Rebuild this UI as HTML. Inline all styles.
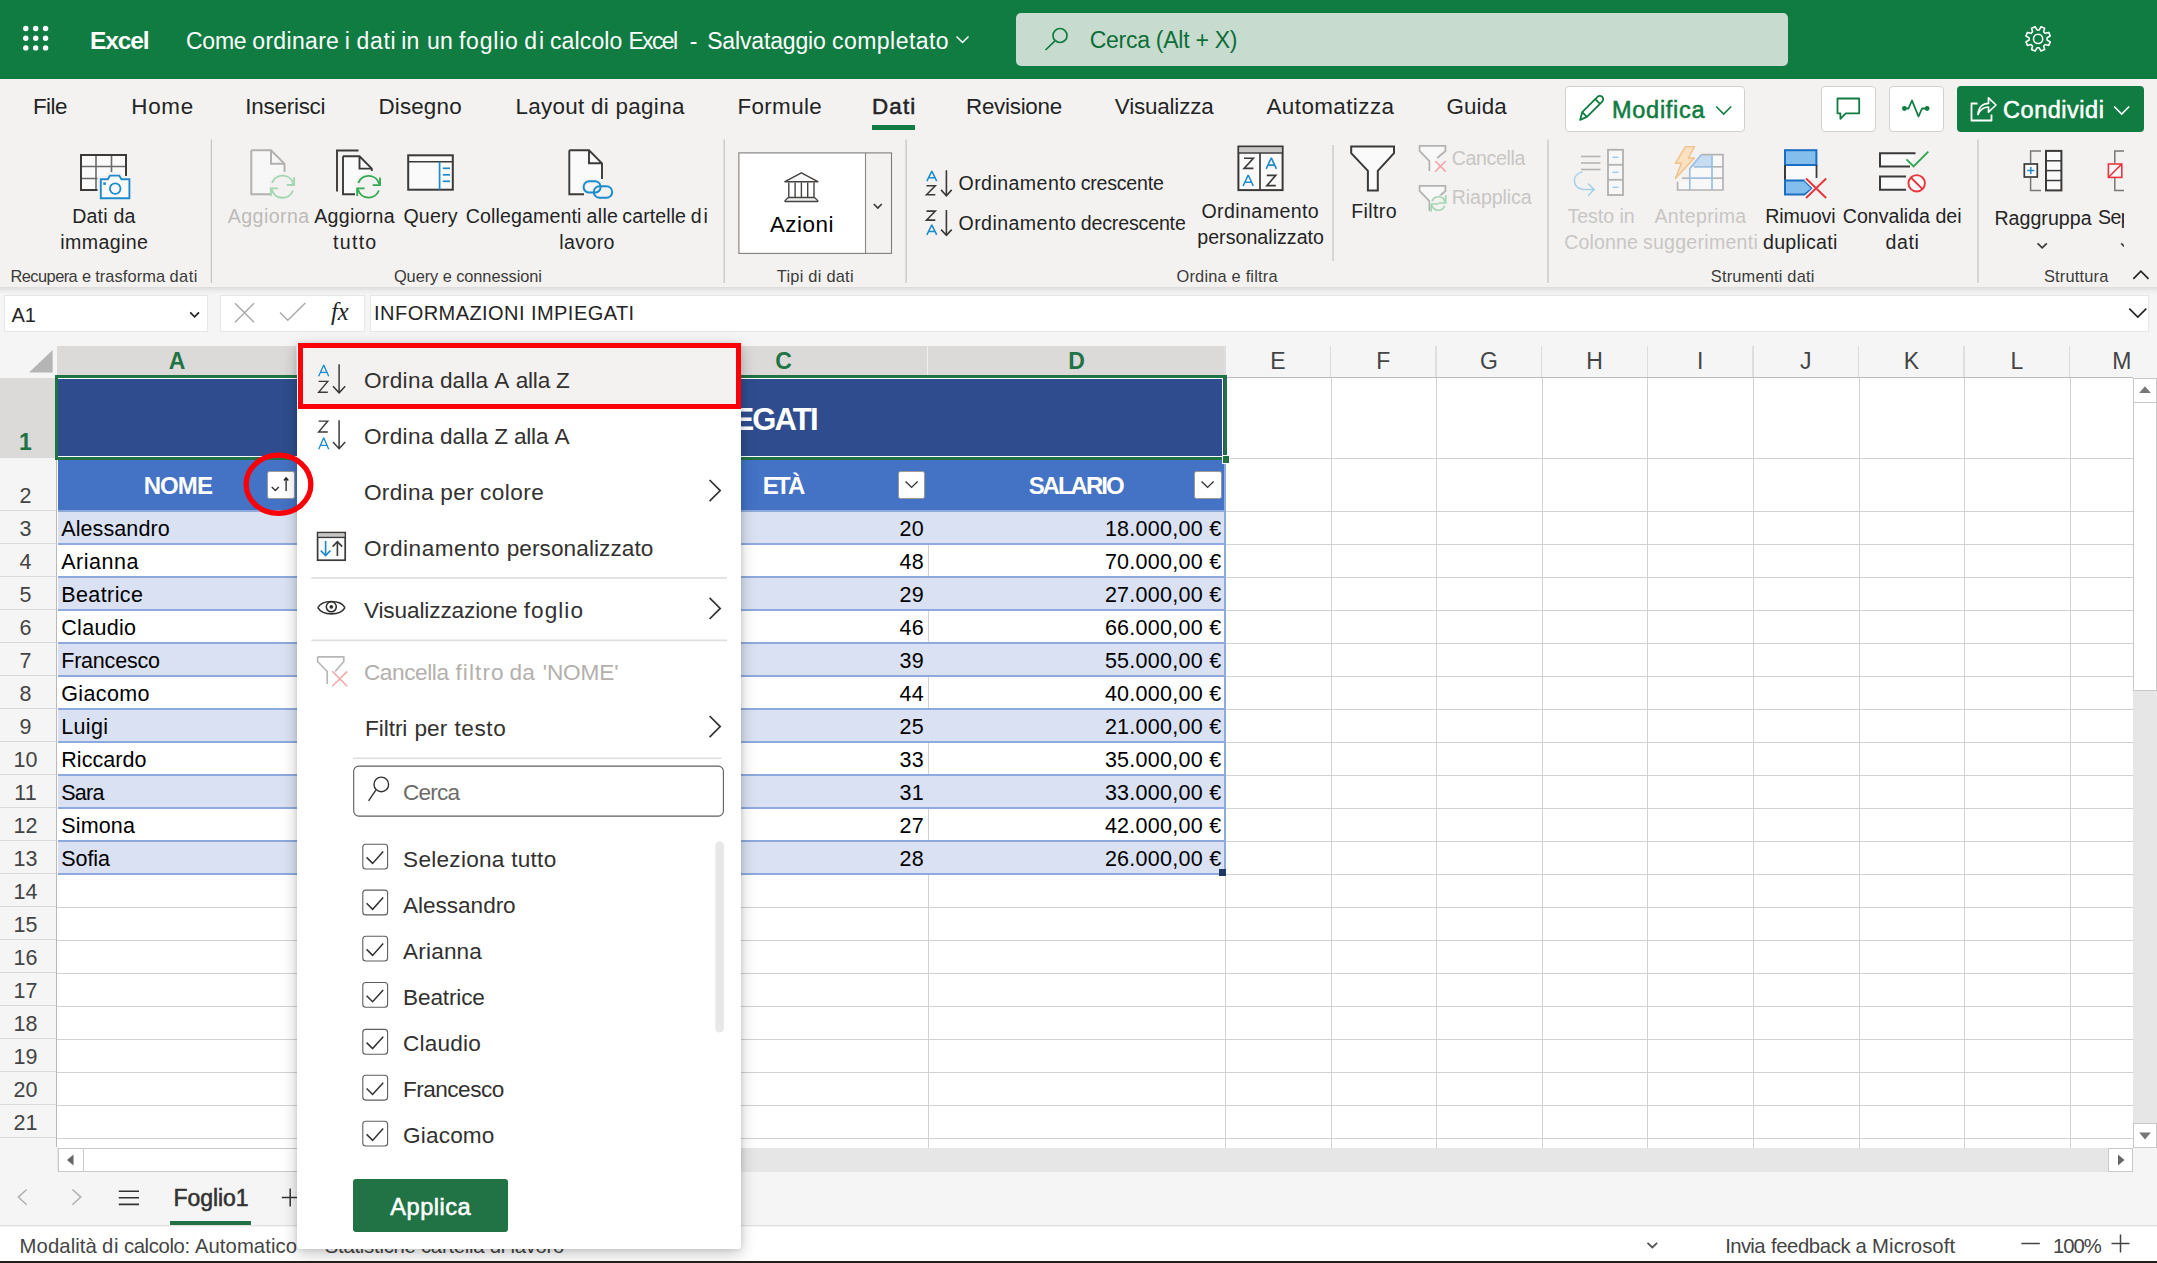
<!DOCTYPE html>
<html><head><meta charset="utf-8"><title>Excel</title>
<style>
html,body{margin:0;padding:0;}html{width:2157px;height:1263px;overflow:hidden;}
body{width:2157px;height:1263px;overflow:hidden;position:relative;background:#f5f5f5;font-family:"Liberation Sans",sans-serif;}
.t{position:absolute;white-space:nowrap;line-height:1;font-family:"Liberation Sans",sans-serif;}
.b{position:absolute;box-sizing:border-box;}
svg{position:absolute;overflow:visible;}
</style></head><body>

<div class="b" style="left:0;top:0;width:2157px;height:79px;background:#107c41"></div>
<svg style="left:0;top:0" width="60" height="79"><circle cx="25.8" cy="28.5" r="2.7" fill="#fff"/><circle cx="35.7" cy="28.5" r="2.7" fill="#fff"/><circle cx="45.6" cy="28.5" r="2.7" fill="#fff"/><circle cx="25.8" cy="38.2" r="2.7" fill="#fff"/><circle cx="35.7" cy="38.2" r="2.7" fill="#fff"/><circle cx="45.6" cy="38.2" r="2.7" fill="#fff"/><circle cx="25.8" cy="47.9" r="2.7" fill="#fff"/><circle cx="35.7" cy="47.9" r="2.7" fill="#fff"/><circle cx="45.6" cy="47.9" r="2.7" fill="#fff"/></svg>
<span class="t" style="top:29.00px;font-size:24.5px;color:#fff;font-weight:700;letter-spacing:-1.118px;left:89.92px;">Excel</span>
<span class="t" style="top:30.00px;font-size:23px;color:#fff;letter-spacing:-0.240px;left:185.98px;">Come</span>
<span class="t" style="top:30.00px;font-size:23px;color:#fff;letter-spacing:0.321px;left:252.28px;">ordinare</span>
<span class="t" style="top:30.00px;font-size:23px;color:#fff;left:344.68px;">i</span>
<span class="t" style="top:30.00px;font-size:23px;color:#fff;letter-spacing:0.649px;left:356.58px;">dati</span>
<span class="t" style="top:30.00px;font-size:23px;color:#fff;letter-spacing:0.234px;left:401.28px;">in</span>
<span class="t" style="top:30.00px;font-size:23px;color:#fff;letter-spacing:0.346px;left:426.88px;">un</span>
<span class="t" style="top:30.00px;font-size:23px;color:#fff;letter-spacing:0.811px;left:458.88px;">foglio</span>
<span class="t" style="top:30.00px;font-size:23px;color:#fff;letter-spacing:2.134px;left:524.18px;">di</span>
<span class="t" style="top:30.00px;font-size:23px;color:#fff;letter-spacing:0.155px;left:549.88px;">calcolo</span>
<span class="t" style="top:30.00px;font-size:23px;color:#fff;letter-spacing:-1.627px;left:628.38px;">Excel</span>
<span class="t" style="top:30.00px;font-size:23px;color:#fff;left:689.70px;">-</span>
<span class="t" style="top:30.00px;font-size:23px;color:#fff;letter-spacing:-0.156px;left:707.18px;">Salvataggio</span>
<span class="t" style="top:30.00px;font-size:23px;color:#fff;letter-spacing:0.447px;left:832.08px;">completato</span>
<svg style="left:955px;top:35px" width="16" height="10"><path d="M1.5 1.5 L7.5 7.5 L13.5 1.5" fill="none" stroke="#fff" stroke-width="1.5"/></svg>
<div class="b" style="left:1016px;top:13px;width:772px;height:53px;background:#c7dbce;border-radius:5px"></div>
<svg style="left:1044px;top:26px" width="26" height="26"><circle cx="16" cy="9.5" r="7" fill="none" stroke="#107c41" stroke-width="1.7"/><path d="M11 14.8 L1.5 24" stroke="#107c41" stroke-width="1.7" fill="none"/></svg>
<span class="t" style="top:29.00px;font-size:23px;color:#0e6e39;letter-spacing:-0.259px;left:1089.68px;">Cerca (Alt + X)</span>
<svg style="left:0;top:0" width="2157" height="79"><g transform="translate(2038.1,38.9)" fill="none" stroke="#fff" stroke-width="1.55"><path d="M-2.40 -8.67 L-1.93 -12.35 L1.93 -12.35 L2.40 -8.67 L4.44 -7.83 L7.37 -10.10 L10.10 -7.37 L7.83 -4.44 L8.67 -2.40 L12.35 -1.93 L12.35 1.93 L8.67 2.40 L7.83 4.44 L10.10 7.37 L7.37 10.10 L4.44 7.83 L2.40 8.67 L1.93 12.35 L-1.93 12.35 L-2.40 8.67 L-4.44 7.83 L-7.37 10.10 L-10.10 7.37 L-7.83 4.44 L-8.67 2.40 L-12.35 1.93 L-12.35 -1.93 L-8.67 -2.40 L-7.83 -4.44 L-10.10 -7.37 L-7.37 -10.10 L-4.44 -7.83 Z" stroke-linejoin="round" transform="rotate(22.5)"/><circle r="4.6"/></g></svg>
<div class="b" style="left:0;top:79px;width:2157px;height:208px;background:#f3f2f1"></div>
<div class="b" style="left:0;top:287px;width:2157px;height:8px;background:linear-gradient(#dddcdb,#efefef 60%,#f5f5f5)"></div>
<span class="t" style="top:96.00px;font-size:22.4px;color:#242424;letter-spacing:-0.501px;left:32.90px;">File</span>
<span class="t" style="top:96.00px;font-size:22.4px;color:#242424;letter-spacing:0.719px;left:131.30px;">Home</span>
<span class="t" style="top:96.00px;font-size:22.4px;color:#242424;letter-spacing:-0.217px;left:245.20px;">Inserisci</span>
<span class="t" style="top:96.00px;font-size:22.4px;color:#242424;letter-spacing:0.173px;left:378.40px;">Disegno</span>
<span class="t" style="top:96.00px;font-size:22.4px;color:#242424;letter-spacing:0.310px;left:515.40px;">Layout di pagina</span>
<span class="t" style="top:96.00px;font-size:22.4px;color:#242424;letter-spacing:0.378px;left:737.40px;">Formule</span>
<span class="t" style="top:96.00px;font-size:22.4px;color:#242424;letter-spacing:-0.267px;left:966.00px;">Revisione</span>
<span class="t" style="top:96.00px;font-size:22.4px;color:#242424;letter-spacing:-0.168px;left:1114.80px;">Visualizza</span>
<span class="t" style="top:96.00px;font-size:22.4px;color:#242424;letter-spacing:0.427px;left:1266.50px;">Automatizza</span>
<span class="t" style="top:96.00px;font-size:22.4px;color:#242424;letter-spacing:0.110px;left:1446.50px;">Guida</span>
<span class="t" style="top:96.00px;font-size:22.4px;color:#242424;-webkit-text-stroke:0.55px currentColor;letter-spacing:1.088px;left:872.10px;">Dati</span>
<div class="b" style="left:872px;top:125px;width:43px;height:5px;background:#107c41"></div>
<div class="b" style="left:1565px;top:86px;width:180px;height:46px;background:#fff;border:1px solid #d1d1d1;border-radius:4px"></div>
<svg style="left:1577px;top:95px" width="30" height="30"><path d="M3.2 24.8 L5.2 17.2 L20.5 1.9 C21.8 0.6 23.9 0.6 25.2 1.9 C26.5 3.2 26.5 5.3 25.2 6.6 L9.9 21.9 Z M5.2 17.2 L9.9 21.9 M18.3 4.1 L23 8.8" fill="none" stroke="#107c41" stroke-width="1.8" stroke-linejoin="round"/></svg>
<span class="t" style="top:99.00px;font-size:23.5px;color:#107c41;-webkit-text-stroke:0.55px currentColor;letter-spacing:0.709px;left:1612.06px;">Modifica</span>
<svg style="left:1715px;top:105px" width="18" height="11"><path d="M1.2 1.5 L8.7 9 L16.2 1.5" fill="none" stroke="#107c41" stroke-width="1.6"/></svg>
<div class="b" style="left:1821px;top:86px;width:55px;height:46px;background:#fff;border:1px solid #d1d1d1;border-radius:4px"></div>
<svg style="left:1836px;top:97px" width="26" height="24"><path d="M1.5 1.5 H23.2 V16.3 H9.8 L4.4 21.8 V16.3 H1.5 Z" fill="none" stroke="#107c41" stroke-width="1.8" stroke-linejoin="round"/></svg>
<div class="b" style="left:1889px;top:86px;width:55px;height:46px;background:#fff;border:1px solid #d1d1d1;border-radius:4px"></div>
<svg style="left:1901px;top:97.8px" width="30" height="22"><path d="M3.5 10.5 H7.5 L11 2.5 L17.5 18.5 L21 10.5 H25.5" fill="none" stroke="#107c41" stroke-width="1.8" stroke-linejoin="round"/><circle cx="3.4" cy="10.5" r="2.4" fill="#107c41"/><circle cx="26.1" cy="10.5" r="2.4" fill="#107c41"/></svg>
<div class="b" style="left:1957px;top:86px;width:187px;height:46px;background:#107c41;border-radius:4px"></div>
<svg style="left:1969px;top:95px" width="30" height="30"><path d="M8.5 8.5 H2.5 V25.5 H22.5 V19.5" fill="none" stroke="#fff" stroke-width="1.8" stroke-linejoin="round"/><path d="M9 19.5 C9.5 12 14 8.3 19.5 8.3 V2.8 L27 10 L19.5 17.2 V12 C15 12 11.5 14 9 19.5 Z" fill="none" stroke="#fff" stroke-width="1.7" stroke-linejoin="round"/></svg>
<span class="t" style="top:99.00px;font-size:23.5px;color:#fff;-webkit-text-stroke:0.55px currentColor;letter-spacing:0.526px;left:2003.06px;">Condividi</span>
<svg style="left:2113px;top:105px" width="18" height="11"><path d="M1.2 1.5 L8.7 9 L16.2 1.5" fill="none" stroke="#fff" stroke-width="1.6"/></svg>
<svg style="left:0;top:0" width="2157" height="300"><path d="M211.4 139.5 L211.4 283" stroke="#c8c6c4" stroke-width="1.3" fill="none"/><path d="M724.2 139.5 L724.2 283" stroke="#c8c6c4" stroke-width="1.3" fill="none"/><path d="M906.1 139.5 L906.1 283" stroke="#c8c6c4" stroke-width="1.3" fill="none"/><path d="M1548 139.5 L1548 283" stroke="#c8c6c4" stroke-width="1.3" fill="none"/><path d="M1978 139.5 L1978 283" stroke="#c8c6c4" stroke-width="1.3" fill="none"/><path d="M1333 145 L1333 261" stroke="#c8c6c4" stroke-width="1.3" fill="none"/><rect x="81" y="155" width="45" height="35" stroke="#3b3a39" stroke-width="2" fill="#fafafa"/><path d="M96 155 L96 190" stroke="#6b6a68" stroke-width="1.6" fill="none"/><path d="M111.5 155 L111.5 190" stroke="#6b6a68" stroke-width="1.6" fill="none"/><path d="M81 166.5 L126 166.5" stroke="#6b6a68" stroke-width="1.6" fill="none"/><path d="M81 178.5 L126 178.5" stroke="#6b6a68" stroke-width="1.6" fill="none"/><rect x="81" y="155" width="45" height="35" stroke="#3b3a39" stroke-width="2" fill="none"/><path d="M99 200 V177.5 H106.5 L109 173.5 H120 L122.5 177.5 H131.5 V200 Z" stroke="#f3f2f1" stroke-width="3" fill="#f3f2f1" /><path d="M100.8 198.2 V179.3 H107.8 L110 175.6 H119.2 L121.4 179.3 H129.4 V198.2 Z" stroke="#1e8bcd" stroke-width="1.9" fill="#fafafa" stroke-linejoin="miter"/><circle cx="115.2" cy="188.6" r="5.3" stroke="#1e8bcd" stroke-width="1.8" fill="none"/><rect x="103.3" y="182.3" width="2.6" height="2.6" fill="#1e8bcd"/><path d="M251.3 150.3 H271 L284.5 163.8 V194.3 H251.3 Z" stroke="none" stroke-width="0" fill="#f7f7f7" /><path d="M251.3 150.3 H271 L284.5 163.8 V172 M270 194.3 H251.3 V150.3 M271 150.3 V163.8 H284.5" stroke="#b3b1af" stroke-width="2" fill="none" /><circle cx="282.5" cy="186.7" r="13.6" stroke="none" stroke-width="0" fill="#f3f2f1"/><path d="M272.0 182.9 A11.2 11.2 0 0 1 293.3 183.8" stroke="#a3d6b3" stroke-width="1.9" fill="none" /><path d="M293.0 190.5 A11.2 11.2 0 0 1 271.7 189.6" stroke="#a3d6b3" stroke-width="1.9" fill="none" /><path d="M286.8 185.0 H294.1 V177.3" stroke="#a3d6b3" stroke-width="1.9" fill="none" /><path d="M278.2 188.4 H270.9 V196.1" stroke="#a3d6b3" stroke-width="1.9" fill="none" /><path d="M358.5 150.5 H337 V191.5" stroke="#3b3a39" stroke-width="1.9" fill="none" /><path d="M343 156.3 H359.5 L371.8 168.6 V194.3 H343 Z" stroke="none" stroke-width="0" fill="#fafafa" /><path d="M343 156.3 H359.5 L371.8 168.6 V171 M355 194.3 H343 V156.3 M359.5 156.3 V168.6 H371.8" stroke="#3b3a39" stroke-width="1.9" fill="none" /><circle cx="368.6" cy="186.7" r="13.6" stroke="none" stroke-width="0" fill="#f3f2f1"/><path d="M358.3 182.9 A11 11 0 0 1 379.2 183.9" stroke="#2fa84f" stroke-width="1.8" fill="none" /><path d="M378.9 190.5 A11 11 0 0 1 358.0 189.5" stroke="#2fa84f" stroke-width="1.8" fill="none" /><path d="M372.7 185.1 H380.0 V177.4" stroke="#2fa84f" stroke-width="1.8" fill="none" /><path d="M364.5 188.3 H357.2 V196.0" stroke="#2fa84f" stroke-width="1.8" fill="none" /><rect x="408.2" y="155.3" width="44.6" height="34.4" stroke="#3b3a39" stroke-width="2" fill="#fafafa"/><path d="M408.2 161.8 L452.8 161.8" stroke="#3b3a39" stroke-width="1.6" fill="none"/><path d="M439.6 161.8 L439.6 189.7" stroke="#1e8bcd" stroke-width="1.7" fill="none"/><path d="M442.8 168.3 L450 168.3" stroke="#1e8bcd" stroke-width="1.7" fill="none"/><path d="M442.8 174.8 L450 174.8" stroke="#1e8bcd" stroke-width="1.7" fill="none"/><path d="M442.8 181.3 L450 181.3" stroke="#1e8bcd" stroke-width="1.7" fill="none"/><path d="M569.3 150.3 H589 L602 163.3 V194.3 H569.3 Z" stroke="none" stroke-width="0" fill="#fafafa" /><path d="M569.3 150.3 H589 L602 163.3 V179 M584 194.3 H569.3 V150.3 M589 150.3 V163.3 H602" stroke="#3b3a39" stroke-width="1.9" fill="none" /><g fill="none" stroke="#1e8bcd" stroke-width="2"><rect x="583.6" y="181.2" width="17" height="11.4" rx="5.7" stroke="#f3f2f1" stroke-width="5"/><rect x="593.8" y="186.2" width="18.4" height="11.6" rx="5.8" stroke="#f3f2f1" stroke-width="5"/><rect x="583.6" y="181.2" width="17" height="11.4" rx="5.7"/><rect x="593.8" y="186.2" width="18.4" height="11.6" rx="5.8"/></g><rect x="738.9" y="152.9" width="152.6" height="100.5" stroke="none" stroke-width="0" fill="#ffffff"/><rect x="865.5" y="152.9" width="26.0" height="100.5" stroke="none" stroke-width="0" fill="#f3f2f1"/><path d="M865.5 152.9 L865.5 253.4" stroke="#8a8886" stroke-width="1.1" fill="none"/><rect x="738.9" y="152.9" width="152.6" height="100.5" stroke="#807e7c" stroke-width="1.1" fill="none"/><path d="M784.9 181.7 L801.4 172.8 L817.9 181.7 Z" stroke="#454341" stroke-width="1.4" fill="#f8f8f8" stroke-linejoin="round"/><path d="M788.8 182.4 L788.8 197.3" stroke="#454341" stroke-width="1.4" fill="none"/><path d="M795.1 182.4 L795.1 197.3" stroke="#454341" stroke-width="1.4" fill="none"/><path d="M801.4 182.4 L801.4 197.3" stroke="#454341" stroke-width="1.4" fill="none"/><path d="M807.7 182.4 L807.7 197.3" stroke="#454341" stroke-width="1.4" fill="none"/><path d="M814.0 182.4 L814.0 197.3" stroke="#454341" stroke-width="1.4" fill="none"/><path d="M788.3 197.5 H814.5 L817.8 200.6 V201.5 H785 V200.6 Z" stroke="#454341" stroke-width="1.3" fill="#efefef" stroke-linejoin="round"/><path d="M873.8 204 L877.8 208 L881.8 204" stroke="#3b3a39" stroke-width="1.7" fill="none" /><path d="M926.90 181.20 L931.80 171.20 L936.70 181.20 M928.76 177.80 H934.84" stroke="#1e8bcd" stroke-width="1.55" fill="none" stroke-linejoin="miter" stroke-miterlimit="2"/><path d="M926.50 185.80 H935.30 L926.50 194.80 H935.30" stroke="#3b3a39" stroke-width="1.55" fill="none" stroke-linejoin="miter"/><path d="M946.4 170.3 V195.5 M941.1 189.9 L946.4 195.70000000000002 L951.7 189.9" stroke="#3b3a39" stroke-width="1.6" fill="none" /><path d="M926.50 211.10 H935.30 L926.50 220.10 H935.30" stroke="#3b3a39" stroke-width="1.55" fill="none" stroke-linejoin="miter"/><path d="M926.90 234.80 L931.80 224.80 L936.70 234.80 M928.76 231.40 H934.84" stroke="#1e8bcd" stroke-width="1.55" fill="none" stroke-linejoin="miter" stroke-miterlimit="2"/><path d="M946.4 210.0 V235.2 M941.1 229.6 L946.4 235.4 L951.7 229.6" stroke="#3b3a39" stroke-width="1.6" fill="none" /><rect x="1238.4" y="146.5" width="44.2" height="43.6" stroke="#3b3a39" stroke-width="2" fill="#fafafa"/><rect x="1239.4" y="147.5" width="42.2" height="5.0" stroke="none" stroke-width="0" fill="#c8c6c4"/><path d="M1238.4 153 L1282.6 153" stroke="#3b3a39" stroke-width="1.5" fill="none"/><path d="M1260 153 L1260 190.1" stroke="#3b3a39" stroke-width="1.7" fill="none"/><path d="M1244.00 158.20 H1253.40 L1244.00 168.40 H1253.40" stroke="#3b3a39" stroke-width="1.6" fill="none" stroke-linejoin="miter"/><path d="M1243.10 186.00 L1248.20 175.00 L1253.30 186.00 M1245.04 182.26 H1251.36" stroke="#1e8bcd" stroke-width="1.6" fill="none" stroke-linejoin="miter" stroke-miterlimit="2"/><path d="M1266.20 168.90 L1271.30 157.90 L1276.40 168.90 M1268.14 165.16 H1274.46" stroke="#1e8bcd" stroke-width="1.6" fill="none" stroke-linejoin="miter" stroke-miterlimit="2"/><path d="M1266.80 175.40 H1275.80 L1266.80 185.60 H1275.80" stroke="#3b3a39" stroke-width="1.6" fill="none" stroke-linejoin="miter"/><path d="M1351.2 146.4 H1394 V153.2 L1377.8 170.9 V190.4 H1367.9 V170.9 L1351.2 153.2 Z" stroke="#3b3a39" stroke-width="2" fill="#fafafa" stroke-linejoin="miter"/><path d="M1419.6 145.9 H1445.4 V151 L1437.2 158 V171 H1429.4 V161 L1419.6 151 Z" stroke="none" stroke-width="0" fill="#f8f8f8" /><path d="M1437.2 158 L1445.4 151 V145.9 H1419.6 V151 L1429.4 161 V171" stroke="#b5b3b1" stroke-width="1.8" fill="none" /><path d="M1435.2 161 L1445.8 171.6 M1445.8 161 L1435.2 171.6" stroke="#f3a5a8" stroke-width="1.6" fill="none" /><path d="M1419.6 185.9 H1445.4 V191 L1437.2 198 V211 H1429.4 V201 L1419.6 191 Z" stroke="none" stroke-width="0" fill="#f8f8f8" /><path d="M1437.2 198 L1445.4 191 V185.9 H1419.6 V191 L1429.4 201 V211" stroke="#b5b3b1" stroke-width="1.8" fill="none" /><circle cx="1438.4" cy="203.5" r="8.6" stroke="none" stroke-width="0" fill="#f3f2f1"/><path d="M1432.1 201.2 A6.7 6.7 0 0 1 1444.9 201.8" stroke="#a3d6b3" stroke-width="1.7" fill="none" /><path d="M1444.7 205.8 A6.7 6.7 0 0 1 1431.9 205.2" stroke="#a3d6b3" stroke-width="1.7" fill="none" /><path d="M1438.4 203.0 H1445.7 V195.3" stroke="#a3d6b3" stroke-width="1.7" fill="none" /><path d="M1438.4 204.0 H1431.1 V211.7" stroke="#a3d6b3" stroke-width="1.7" fill="none" /><path d="M1581 156.5 L1600.5 156.5" stroke="#b5b3b1" stroke-width="1.6" fill="none"/><path d="M1581 163 L1600.5 163" stroke="#b5b3b1" stroke-width="1.6" fill="none"/><path d="M1581 169.5 L1600.5 169.5" stroke="#b5b3b1" stroke-width="1.6" fill="none"/><rect x="1608" y="149.8" width="15" height="45.2" stroke="#b5b3b1" stroke-width="1.9" fill="#f7f7f7"/><path d="M1608 164.8 L1623 164.8" stroke="#b5b3b1" stroke-width="1.8" fill="none"/><path d="M1608 179.8 L1623 179.8" stroke="#b5b3b1" stroke-width="1.8" fill="none"/><path d="M1612.5 157.3 L1618.5 157.3" stroke="#9ccbea" stroke-width="1.4" fill="none"/><path d="M1612.5 172.3 L1618.5 172.3" stroke="#9ccbea" stroke-width="1.4" fill="none"/><path d="M1612.5 187.3 L1618.5 187.3" stroke="#9ccbea" stroke-width="1.4" fill="none"/><path d="M1582.5 172 C1572 174 1571 187 1583 189.5 H1594 M1588 183.5 L1594.2 189.6 L1588 195.8" stroke="#a6cfe9" stroke-width="1.5" fill="none" /><path d="M1701.3 154.6 H1723 V190 H1677.6 V181.6 H1689.8 V168.6 Z" stroke="none" stroke-width="0" fill="#f8f8f8" /><path d="M1701.3 154.6 H1712 V166.8 H1691.3 Z" stroke="none" stroke-width="0" fill="#c6dcf0" /><path d="M1701.3 154.6 H1723 V190 H1677.6 V181.8" stroke="#b5b3b1" stroke-width="1.7" fill="none" /><path d="M1712 166.8 L1723 166.8" stroke="#b5b3b1" stroke-width="1.6" fill="none"/><path d="M1712 178.2 L1723 178.2" stroke="#b5b3b1" stroke-width="1.6" fill="none"/><path d="M1682 178.2 L1689.8 178.2" stroke="#b5b3b1" stroke-width="1.6" fill="none"/><path d="M1712 154.6 V190 M1689.8 190 V168.6 L1701.3 154.6 M1694 166.8 H1712 M1689.8 178.2 H1712" stroke="#9dc0e2" stroke-width="1.7" fill="none" /><path d="M1685.5 146.6 H1694.6 L1688.3 158 H1694.4 L1675.4 178.4 L1681.4 163.2 H1675.4 Z" stroke="#f2c18a" stroke-width="1.4" fill="#fbe1c0" stroke-linejoin="round"/><rect x="1785" y="150.2" width="31.4" height="14.8" stroke="#1a6fc4" stroke-width="2" fill="#83beec"/><path d="M1785 165 V180.6 M1816.4 165 V178" stroke="#3b3a39" stroke-width="2" fill="none" /><rect x="1786" y="166" width="29.4" height="13.6" fill="#fafafa"/><path d="M1785 180.6 H1804.5 L1812.5 188.5 L1804.5 194.6 H1785 Z" stroke="#1a6fc4" stroke-width="2" fill="#83beec" stroke-linejoin="miter"/><path d="M1806 178.5 L1826.2 198 M1826.2 178.5 L1806 198" stroke="#f3f2f1" stroke-width="5" fill="none" /><path d="M1806 178.5 L1826.2 198 M1826.2 178.5 L1806 198" stroke="#e8353b" stroke-width="1.9" fill="none" /><path d="M1915.5 153.3 H1880 V166.6 H1910" stroke="#3b3a39" stroke-width="2" fill="#fafafa" /><path d="M1906 176.4 H1880 V189.8 H1906" stroke="#3b3a39" stroke-width="2" fill="#fafafa" /><path d="M1906.5 159.3 L1913.6 166.4 L1928.3 151.7" stroke="#2fa84f" stroke-width="1.9" fill="none" /><circle cx="1916.7" cy="183.3" r="8.2" stroke="#f3f2f1" stroke-width="4" fill="#fafafa"/><circle cx="1916.7" cy="183.3" r="8.2" stroke="#e8353b" stroke-width="1.9" fill="#fafafa"/><path d="M1910.9 177.5 L1922.5 189.1" stroke="#e8353b" stroke-width="1.9" fill="none"/><path d="M2041 150.9 H2030.6 V163 M2030.6 178 V190.4 H2041" stroke="#797775" stroke-width="1.5" fill="none" /><rect x="2046" y="150.9" width="15.4" height="39.5" stroke="#3b3a39" stroke-width="2" fill="#fafafa"/><path d="M2046 160.8 L2061.4 160.8" stroke="#3b3a39" stroke-width="1.5" fill="none"/><path d="M2046 170.6 L2061.4 170.6" stroke="#3b3a39" stroke-width="1.5" fill="none"/><path d="M2046 180.5 L2061.4 180.5" stroke="#3b3a39" stroke-width="1.5" fill="none"/><rect x="2024.3" y="164" width="13" height="13" stroke="#3b3a39" stroke-width="1.7" fill="#fafafa"/><path d="M2027.2 170.5 H2034.4 M2030.8 166.9 V174.1" stroke="#1e8bcd" stroke-width="1.5" fill="none" /><path d="M2037.6 243.3 L2042.2 247.9 L2046.8 243.3" stroke="#3b3a39" stroke-width="1.7" fill="none" /></svg>
<div class="b" style="left:2090px;top:140px;width:34px;height:140px;overflow:hidden"><svg style="left:-2090px;top:-140px" width="2157" height="300"><path d="M2124 150.9 H2114.8 V163 M2114.8 178 V190.4 H2124" stroke="#797775" stroke-width="1.5" fill="none"/><rect x="2108.4" y="164" width="13.4" height="13.4" stroke="#e8353b" stroke-width="1.6" fill="#fafafa"/><path d="M2108.8 177 L2121.4 164.4" stroke="#e8353b" stroke-width="1.5"/><path d="M2121.2 243.3 L2125.8 247.9" stroke="#3b3a39" stroke-width="1.7"/></svg><span class="t" style="left:7.9px;top:68.4px;font-size:19.6px;color:#242424;letter-spacing:-0.5px">Separa</span></div>
<span class="t" style="top:207.00px;font-size:19.6px;color:#242424;letter-spacing:0.179px;left:72.22px;">Dati da</span>
<span class="t" style="top:233.00px;font-size:19.6px;color:#242424;letter-spacing:0.374px;left:60.32px;">immagine</span>
<span class="t" style="top:207.00px;font-size:19.6px;color:#bdbbb8;letter-spacing:0.433px;left:227.72px;">Aggiorna</span>
<span class="t" style="top:207.00px;font-size:19.6px;color:#242424;letter-spacing:0.290px;left:314.22px;">Aggiorna</span>
<span class="t" style="top:233.00px;font-size:19.6px;color:#242424;letter-spacing:1.282px;left:333.02px;">tutto</span>
<span class="t" style="top:207.00px;font-size:19.6px;color:#242424;letter-spacing:0.202px;left:403.42px;">Query</span>
<span class="t" style="top:207.00px;font-size:19.6px;color:#242424;letter-spacing:0.119px;left:465.72px;">Collegamenti</span>
<span class="t" style="top:207.00px;font-size:19.6px;color:#242424;letter-spacing:0.284px;left:586.62px;">alle</span>
<span class="t" style="top:207.00px;font-size:19.6px;color:#242424;letter-spacing:0.071px;left:622.32px;">cartelle</span>
<span class="t" style="top:207.00px;font-size:19.6px;color:#242424;letter-spacing:1.902px;left:690.72px;">di</span>
<span class="t" style="top:233.00px;font-size:19.6px;color:#242424;letter-spacing:0.379px;left:559.22px;">lavoro</span>
<span class="t" style="top:214.00px;font-size:22.4px;color:#000;letter-spacing:0.542px;left:769.90px;">Azioni</span>
<span class="t" style="top:174.00px;font-size:19.6px;color:#242424;letter-spacing:0.419px;left:958.52px;">Ordinamento</span>
<span class="t" style="top:174.00px;font-size:19.6px;color:#242424;letter-spacing:-0.236px;left:1080.72px;">crescente</span>
<span class="t" style="top:214.00px;font-size:19.6px;color:#242424;letter-spacing:0.419px;left:958.52px;">Ordinamento</span>
<span class="t" style="top:214.00px;font-size:19.6px;color:#242424;letter-spacing:-0.168px;left:1080.72px;">decrescente</span>
<span class="t" style="top:202.00px;font-size:19.6px;color:#242424;letter-spacing:0.409px;left:1201.42px;">Ordinamento</span>
<span class="t" style="top:228.00px;font-size:19.6px;color:#242424;letter-spacing:0.031px;left:1197.22px;">personalizzato</span>
<span class="t" style="top:202.00px;font-size:19.6px;color:#242424;letter-spacing:0.364px;left:1351.22px;">Filtro</span>
<span class="t" style="top:149.00px;font-size:19.6px;color:#c8c6c4;letter-spacing:-0.383px;left:1451.82px;">Cancella</span>
<span class="t" style="top:188.00px;font-size:19.6px;color:#c8c6c4;letter-spacing:-0.105px;left:1451.82px;">Riapplica</span>
<span class="t" style="top:207.00px;font-size:19.6px;color:#c8c6c4;letter-spacing:-0.038px;left:1567.42px;">Testo in</span>
<span class="t" style="top:233.00px;font-size:19.6px;color:#c8c6c4;letter-spacing:0.095px;left:1564.22px;">Colonne</span>
<span class="t" style="top:207.00px;font-size:19.6px;color:#c8c6c4;letter-spacing:0.319px;left:1654.42px;">Anteprima</span>
<span class="t" style="top:233.00px;font-size:19.6px;color:#c8c6c4;letter-spacing:0.244px;left:1642.92px;">suggerimenti</span>
<span class="t" style="top:207.00px;font-size:19.6px;color:#242424;letter-spacing:-0.069px;left:1765.22px;">Rimuovi</span>
<span class="t" style="top:233.00px;font-size:19.6px;color:#242424;letter-spacing:0.335px;left:1762.92px;">duplicati</span>
<span class="t" style="top:207.00px;font-size:19.6px;color:#242424;letter-spacing:0.003px;left:1842.82px;">Convalida dei</span>
<span class="t" style="top:233.00px;font-size:19.6px;color:#242424;letter-spacing:0.558px;left:1885.52px;">dati</span>
<span class="t" style="top:209.00px;font-size:19.6px;color:#242424;letter-spacing:0.025px;left:1994.42px;">Raggruppa</span>
<span class="t" style="top:268.00px;font-size:16.4px;color:#3b3a39;letter-spacing:-0.538px;left:10.44px;">Recupera</span>
<span class="t" style="top:268.00px;font-size:16.4px;color:#3b3a39;left:81.94px;">e</span>
<span class="t" style="top:268.00px;font-size:16.4px;color:#3b3a39;letter-spacing:0.097px;left:95.14px;">trasforma</span>
<span class="t" style="top:268.00px;font-size:16.4px;color:#3b3a39;letter-spacing:0.458px;left:169.54px;">dati</span>
<span class="t" style="top:268.00px;font-size:16.4px;color:#3b3a39;letter-spacing:-0.078px;left:393.94px;">Query e connessioni</span>
<span class="t" style="top:268.00px;font-size:16.4px;color:#3b3a39;letter-spacing:0.247px;left:776.74px;">Tipi di dati</span>
<span class="t" style="top:268.00px;font-size:16.4px;color:#3b3a39;letter-spacing:0.187px;left:1176.54px;">Ordina e filtra</span>
<span class="t" style="top:268.00px;font-size:16.4px;color:#3b3a39;letter-spacing:0.184px;left:1710.84px;">Strumenti dati</span>
<span class="t" style="top:268.00px;font-size:16.4px;color:#3b3a39;letter-spacing:0.182px;left:2043.94px;">Struttura</span>
<svg style="left:2132px;top:269px" width="18" height="12"><path d="M1.3 9.8 L8.9 2.2 L16.5 9.8" fill="none" stroke="#242424" stroke-width="1.7"/></svg>
<div class="b" style="left:4px;top:294.6px;width:204px;height:37px;background:#fff;border:1px solid #e6e6e6"></div>
<div class="b" style="left:220px;top:294.6px;width:145px;height:37px;background:#fff;border:1px solid #e6e6e6"></div>
<div class="b" style="left:370px;top:294.6px;width:1779px;height:37px;background:#fff;border:1px solid #e6e6e6"></div>
<span class="t" style="top:305.00px;font-size:20px;color:#242424;left:11.40px;">A1</span>
<svg style="left:189px;top:311px" width="12" height="8"><path d="M1.2 1.4 L5.6 5.8 L10 1.4" fill="none" stroke="#242424" stroke-width="1.7"/></svg>
<svg style="left:234px;top:302.2px" width="22" height="22"><path d="M1 1.3 L20 20.3 M20 1.3 L1 20.3" fill="none" stroke="#a8a8a8" stroke-width="1.4"/></svg>
<svg style="left:279px;top:302.4px" width="28" height="20"><path d="M1 10.5 L8.8 18.3 L26.3 1" fill="none" stroke="#a8a8a8" stroke-width="1.4"/></svg>
<span class="t" style="top:300.00px;font-size:24.5px;color:#242424;font-family:'Liberation Serif',serif;font-style:italic;left:331.00px;">fx</span>
<span class="t" style="top:303.00px;font-size:20px;color:#242424;letter-spacing:0.445px;left:374.10px;">INFORMAZIONI IMPIEGATI</span>
<svg style="left:2128px;top:307px" width="20" height="13"><path d="M1.3 1.6 L9.8 10.1 L18.3 1.6" fill="none" stroke="#242424" stroke-width="1.7"/></svg>
<div class="b" style="left:57px;top:378px;width:2076px;height:770px;background:#fff"></div><div class="b" style="left:57px;top:346px;width:1168px;height:30px;background:#dbdad8"></div><div class="b" style="left:296.0px;top:346px;width:1.4px;height:30px;background:#efefef"></div><div class="b" style="left:638.0px;top:346px;width:1.4px;height:30px;background:#efefef"></div><div class="b" style="left:927.0px;top:346px;width:1.4px;height:30px;background:#efefef"></div><div class="b" style="left:1224.2px;top:346px;width:1.4px;height:31px;background:#dedede"></div><div class="b" style="left:1329.8px;top:346px;width:1.4px;height:31px;background:#dedede"></div><div class="b" style="left:1435.4px;top:346px;width:1.4px;height:31px;background:#dedede"></div><div class="b" style="left:1541.0px;top:346px;width:1.4px;height:31px;background:#dedede"></div><div class="b" style="left:1646.6px;top:346px;width:1.4px;height:31px;background:#dedede"></div><div class="b" style="left:1752.2px;top:346px;width:1.4px;height:31px;background:#dedede"></div><div class="b" style="left:1857.8px;top:346px;width:1.4px;height:31px;background:#dedede"></div><div class="b" style="left:1963.4px;top:346px;width:1.4px;height:31px;background:#dedede"></div><div class="b" style="left:2069.0px;top:346px;width:1.4px;height:31px;background:#dedede"></div><div class="b" style="left:1226px;top:376.7px;width:907px;height:1.4px;background:#bcbcbc"></div><div class="b" style="left:0;top:378px;width:55.5px;height:80px;background:#dbdad8"></div><div class="b" style="left:56px;top:459px;width:1px;height:688px;background:#b9b9b9"></div><div class="b" style="left:0;top:457px;width:56px;height:1px;background:#d9d9d9"></div><div class="b" style="left:0;top:510px;width:56px;height:1px;background:#d9d9d9"></div><div class="b" style="left:0;top:543px;width:56px;height:1px;background:#d9d9d9"></div><div class="b" style="left:0;top:576px;width:56px;height:1px;background:#d9d9d9"></div><div class="b" style="left:0;top:609px;width:56px;height:1px;background:#d9d9d9"></div><div class="b" style="left:0;top:642px;width:56px;height:1px;background:#d9d9d9"></div><div class="b" style="left:0;top:675px;width:56px;height:1px;background:#d9d9d9"></div><div class="b" style="left:0;top:708px;width:56px;height:1px;background:#d9d9d9"></div><div class="b" style="left:0;top:741px;width:56px;height:1px;background:#d9d9d9"></div><div class="b" style="left:0;top:774px;width:56px;height:1px;background:#d9d9d9"></div><div class="b" style="left:0;top:807px;width:56px;height:1px;background:#d9d9d9"></div><div class="b" style="left:0;top:840px;width:56px;height:1px;background:#d9d9d9"></div><div class="b" style="left:0;top:873px;width:56px;height:1px;background:#d9d9d9"></div><div class="b" style="left:0;top:906px;width:56px;height:1px;background:#d9d9d9"></div><div class="b" style="left:0;top:939px;width:56px;height:1px;background:#d9d9d9"></div><div class="b" style="left:0;top:972px;width:56px;height:1px;background:#d9d9d9"></div><div class="b" style="left:0;top:1005px;width:56px;height:1px;background:#d9d9d9"></div><div class="b" style="left:0;top:1038px;width:56px;height:1px;background:#d9d9d9"></div><div class="b" style="left:0;top:1071px;width:56px;height:1px;background:#d9d9d9"></div><div class="b" style="left:0;top:1104px;width:56px;height:1px;background:#d9d9d9"></div><div class="b" style="left:0;top:1137px;width:56px;height:1px;background:#d9d9d9"></div><svg style="left:28px;top:349px" width="26" height="25"><path d="M24.6 1 V23.4 H1 Z" fill="#b5b5b5"/></svg><div class="b" style="left:1226px;top:458px;width:907px;height:1px;background:#d2d2d2"></div><div class="b" style="left:1226px;top:511px;width:907px;height:1px;background:#d2d2d2"></div><div class="b" style="left:1226px;top:544px;width:907px;height:1px;background:#d2d2d2"></div><div class="b" style="left:1226px;top:577px;width:907px;height:1px;background:#d2d2d2"></div><div class="b" style="left:1226px;top:610px;width:907px;height:1px;background:#d2d2d2"></div><div class="b" style="left:1226px;top:643px;width:907px;height:1px;background:#d2d2d2"></div><div class="b" style="left:1226px;top:676px;width:907px;height:1px;background:#d2d2d2"></div><div class="b" style="left:1226px;top:709px;width:907px;height:1px;background:#d2d2d2"></div><div class="b" style="left:1226px;top:742px;width:907px;height:1px;background:#d2d2d2"></div><div class="b" style="left:1226px;top:775px;width:907px;height:1px;background:#d2d2d2"></div><div class="b" style="left:1226px;top:808px;width:907px;height:1px;background:#d2d2d2"></div><div class="b" style="left:1226px;top:841px;width:907px;height:1px;background:#d2d2d2"></div><div class="b" style="left:1226px;top:874px;width:907px;height:1px;background:#d2d2d2"></div><div class="b" style="left:57px;top:907px;width:2076px;height:1px;background:#d2d2d2"></div><div class="b" style="left:57px;top:940px;width:2076px;height:1px;background:#d2d2d2"></div><div class="b" style="left:57px;top:973px;width:2076px;height:1px;background:#d2d2d2"></div><div class="b" style="left:57px;top:1006px;width:2076px;height:1px;background:#d2d2d2"></div><div class="b" style="left:57px;top:1039px;width:2076px;height:1px;background:#d2d2d2"></div><div class="b" style="left:57px;top:1072px;width:2076px;height:1px;background:#d2d2d2"></div><div class="b" style="left:57px;top:1105px;width:2076px;height:1px;background:#d2d2d2"></div><div class="b" style="left:57px;top:1138px;width:2076px;height:1px;background:#d2d2d2"></div><div class="b" style="left:1331px;top:378px;width:1px;height:770px;background:#d2d2d2"></div><div class="b" style="left:1436px;top:378px;width:1px;height:770px;background:#d2d2d2"></div><div class="b" style="left:1542px;top:378px;width:1px;height:770px;background:#d2d2d2"></div><div class="b" style="left:1647px;top:378px;width:1px;height:770px;background:#d2d2d2"></div><div class="b" style="left:1753px;top:378px;width:1px;height:770px;background:#d2d2d2"></div><div class="b" style="left:1859px;top:378px;width:1px;height:770px;background:#d2d2d2"></div><div class="b" style="left:1964px;top:378px;width:1px;height:770px;background:#d2d2d2"></div><div class="b" style="left:2070px;top:378px;width:1px;height:770px;background:#d2d2d2"></div><div class="b" style="left:297px;top:875px;width:1px;height:273px;background:#d2d2d2"></div><div class="b" style="left:639px;top:875px;width:1px;height:273px;background:#d2d2d2"></div><div class="b" style="left:928px;top:875px;width:1px;height:273px;background:#d2d2d2"></div><div class="b" style="left:1225px;top:875px;width:1px;height:273px;background:#d2d2d2"></div><div class="b" style="left:58px;top:378px;width:1167px;height:80px;background:#2f4d8e"></div><div class="b" style="left:58px;top:459px;width:1167px;height:51px;background:#4472c4"></div><div class="b" style="left:58px;top:511px;width:1167px;height:33px;background:#d9e1f2"></div><div class="b" style="left:58px;top:544px;width:1167px;height:33px;background:#ffffff"></div><div class="b" style="left:297px;top:544px;width:1px;height:33px;background:#d2d2d2"></div><div class="b" style="left:639px;top:544px;width:1px;height:33px;background:#d2d2d2"></div><div class="b" style="left:928px;top:544px;width:1px;height:33px;background:#d2d2d2"></div><div class="b" style="left:58px;top:577px;width:1167px;height:33px;background:#d9e1f2"></div><div class="b" style="left:58px;top:610px;width:1167px;height:33px;background:#ffffff"></div><div class="b" style="left:297px;top:610px;width:1px;height:33px;background:#d2d2d2"></div><div class="b" style="left:639px;top:610px;width:1px;height:33px;background:#d2d2d2"></div><div class="b" style="left:928px;top:610px;width:1px;height:33px;background:#d2d2d2"></div><div class="b" style="left:58px;top:643px;width:1167px;height:33px;background:#d9e1f2"></div><div class="b" style="left:58px;top:676px;width:1167px;height:33px;background:#ffffff"></div><div class="b" style="left:297px;top:676px;width:1px;height:33px;background:#d2d2d2"></div><div class="b" style="left:639px;top:676px;width:1px;height:33px;background:#d2d2d2"></div><div class="b" style="left:928px;top:676px;width:1px;height:33px;background:#d2d2d2"></div><div class="b" style="left:58px;top:709px;width:1167px;height:33px;background:#d9e1f2"></div><div class="b" style="left:58px;top:742px;width:1167px;height:33px;background:#ffffff"></div><div class="b" style="left:297px;top:742px;width:1px;height:33px;background:#d2d2d2"></div><div class="b" style="left:639px;top:742px;width:1px;height:33px;background:#d2d2d2"></div><div class="b" style="left:928px;top:742px;width:1px;height:33px;background:#d2d2d2"></div><div class="b" style="left:58px;top:775px;width:1167px;height:33px;background:#d9e1f2"></div><div class="b" style="left:58px;top:808px;width:1167px;height:33px;background:#ffffff"></div><div class="b" style="left:297px;top:808px;width:1px;height:33px;background:#d2d2d2"></div><div class="b" style="left:639px;top:808px;width:1px;height:33px;background:#d2d2d2"></div><div class="b" style="left:928px;top:808px;width:1px;height:33px;background:#d2d2d2"></div><div class="b" style="left:58px;top:841px;width:1167px;height:33px;background:#d9e1f2"></div><div class="b" style="left:58px;top:510px;width:1168px;height:2px;background:#8ea9db"></div><div class="b" style="left:58px;top:543px;width:1168px;height:2px;background:#8ea9db"></div><div class="b" style="left:58px;top:576px;width:1168px;height:2px;background:#8ea9db"></div><div class="b" style="left:58px;top:609px;width:1168px;height:2px;background:#8ea9db"></div><div class="b" style="left:58px;top:642px;width:1168px;height:2px;background:#8ea9db"></div><div class="b" style="left:58px;top:675px;width:1168px;height:2px;background:#8ea9db"></div><div class="b" style="left:58px;top:708px;width:1168px;height:2px;background:#8ea9db"></div><div class="b" style="left:58px;top:741px;width:1168px;height:2px;background:#8ea9db"></div><div class="b" style="left:58px;top:774px;width:1168px;height:2px;background:#8ea9db"></div><div class="b" style="left:58px;top:807px;width:1168px;height:2px;background:#8ea9db"></div><div class="b" style="left:58px;top:840px;width:1168px;height:2px;background:#8ea9db"></div><div class="b" style="left:58px;top:873px;width:1168px;height:2px;background:#8ea9db"></div><div class="b" style="left:1224px;top:460px;width:2px;height:415px;background:#8ea9db"></div><div class="b" style="left:55px;top:375.1px;width:1171.6px;height:84.7px;border:3.1px solid #217346;"></div><div class="b" style="left:58.1px;top:378.1px;width:1165.4px;height:1.1px;background:#fff"></div><div class="b" style="left:58.1px;top:455.7px;width:1165.4px;height:1.1px;background:#fff"></div><div class="b" style="left:1221.5px;top:455px;width:8px;height:8.5px;background:#217346;border:1px solid #fff"></div><div class="b" style="left:1218.5px;top:869px;width:7px;height:6.5px;background:#1f3864"></div><div class="b" style="left:267.4px;top:471.4px;width:27.2px;height:27.3px;background:#fff;border:1px solid #9c9a98;border-radius:2.5px"></div><div class="b" style="left:897.6px;top:471.4px;width:27.2px;height:27.3px;background:#fff;border:1px solid #9c9a98;border-radius:2.5px"></div><div class="b" style="left:1194.4px;top:471.4px;width:27.2px;height:27.3px;background:#fff;border:1px solid #9c9a98;border-radius:2.5px"></div><svg style="left:897.6px;top:471.4px" width="28" height="28"><path d="M7.6 10.6 L13.6 16.4 L19.6 10.6" fill="none" stroke="#333" stroke-width="1.4"/></svg><svg style="left:1194.4px;top:471.4px" width="28" height="28"><path d="M7.6 10.6 L13.6 16.4 L19.6 10.6" fill="none" stroke="#333" stroke-width="1.4"/></svg><svg style="left:267.4px;top:471.4px" width="28" height="28"><path d="M4.8 16 L8.3 19.4 L11.8 16" fill="none" stroke="#333" stroke-width="1.4"/><path d="M19.1 20 V7 M16.9 9.5 L19.1 6.8 L21.3 9.5" fill="none" stroke="#222" stroke-width="1.3"/></svg><div class="b" style="left:1222.4px;top:379px;width:1.1px;height:77px;background:#fff"></div>
<span class="t" style="top:350.00px;font-size:23px;color:#217346;font-weight:700;left:168.69px;">A</span>
<span class="t" style="top:350.00px;font-size:23px;color:#217346;font-weight:700;left:459.69px;">B</span>
<span class="t" style="top:350.00px;font-size:23px;color:#217346;font-weight:700;left:775.19px;">C</span>
<span class="t" style="top:350.00px;font-size:23px;color:#217346;font-weight:700;left:1068.19px;">D</span>
<span class="t" style="top:350.00px;font-size:23px;color:#444;left:1270.13px;">E</span>
<span class="t" style="top:350.00px;font-size:23px;color:#444;left:1376.37px;">F</span>
<span class="t" style="top:350.00px;font-size:23px;color:#444;left:1480.05px;">G</span>
<span class="t" style="top:350.00px;font-size:23px;color:#444;left:1586.29px;">H</span>
<span class="t" style="top:350.00px;font-size:23px;color:#444;left:1697.00px;">I</span>
<span class="t" style="top:350.00px;font-size:23px;color:#444;left:1800.05px;">J</span>
<span class="t" style="top:350.00px;font-size:23px;color:#444;left:1903.73px;">K</span>
<span class="t" style="top:350.00px;font-size:23px;color:#444;left:2010.60px;">L</span>
<span class="t" style="top:350.00px;font-size:23px;color:#444;left:2112.21px;">M</span>
<span class="t" style="top:431.00px;font-size:23px;color:#217346;font-weight:700;left:19.10px;">1</span>
<span class="t" style="top:486.00px;font-size:21.5px;color:#444;left:19.52px;">2</span>
<span class="t" style="top:519.00px;font-size:21.5px;color:#444;left:19.52px;">3</span>
<span class="t" style="top:552.00px;font-size:21.5px;color:#444;left:19.52px;">4</span>
<span class="t" style="top:585.00px;font-size:21.5px;color:#444;left:19.52px;">5</span>
<span class="t" style="top:618.00px;font-size:21.5px;color:#444;left:19.52px;">6</span>
<span class="t" style="top:651.00px;font-size:21.5px;color:#444;left:19.52px;">7</span>
<span class="t" style="top:684.00px;font-size:21.5px;color:#444;left:19.52px;">8</span>
<span class="t" style="top:717.00px;font-size:21.5px;color:#444;left:19.52px;">9</span>
<span class="t" style="top:750.00px;font-size:21.5px;color:#444;left:13.54px;">10</span>
<span class="t" style="top:783.00px;font-size:21.5px;color:#444;left:14.34px;">11</span>
<span class="t" style="top:816.00px;font-size:21.5px;color:#444;left:13.54px;">12</span>
<span class="t" style="top:849.00px;font-size:21.5px;color:#444;left:13.54px;">13</span>
<span class="t" style="top:882.00px;font-size:21.5px;color:#444;left:13.54px;">14</span>
<span class="t" style="top:915.00px;font-size:21.5px;color:#444;left:13.54px;">15</span>
<span class="t" style="top:948.00px;font-size:21.5px;color:#444;left:13.54px;">16</span>
<span class="t" style="top:981.00px;font-size:21.5px;color:#444;left:13.54px;">17</span>
<span class="t" style="top:1014.00px;font-size:21.5px;color:#444;left:13.54px;">18</span>
<span class="t" style="top:1047.00px;font-size:21.5px;color:#444;left:13.54px;">19</span>
<span class="t" style="top:1080.00px;font-size:21.5px;color:#444;left:13.54px;">20</span>
<span class="t" style="top:1113.00px;font-size:21.5px;color:#444;left:13.54px;">21</span>
<span class="t" style="top:404.00px;font-size:31px;color:#fff;font-weight:700;letter-spacing:-1.838px;left:465.06px;">INFORMAZIONI IMPIEGATI</span>
<span class="t" style="top:474.00px;font-size:24px;color:#fff;font-weight:700;letter-spacing:-0.927px;left:143.69px;">NOME</span>
<span class="t" style="top:474.00px;font-size:24px;color:#fff;font-weight:700;letter-spacing:-2.740px;left:762.74px;">ETÀ</span>
<span class="t" style="top:474.00px;font-size:24px;color:#fff;font-weight:700;letter-spacing:-2.013px;left:1028.64px;">SALARIO</span>
<span class="t" style="top:519.00px;font-size:21.5px;color:#000;letter-spacing:0.094px;left:61.24px;">Alessandro</span>
<span class="t" style="top:519.00px;font-size:21.5px;color:#000;letter-spacing:0.298px;left:899.38px;">20</span>
<span class="t" style="top:519.00px;font-size:21.5px;color:#000;letter-spacing:0.263px;left:1104.88px;">18.000,00 €</span>
<span class="t" style="top:552.00px;font-size:21.5px;color:#000;letter-spacing:0.518px;left:61.24px;">Arianna</span>
<span class="t" style="top:552.00px;font-size:21.5px;color:#000;letter-spacing:0.298px;left:899.38px;">48</span>
<span class="t" style="top:552.00px;font-size:21.5px;color:#000;letter-spacing:0.263px;left:1104.88px;">70.000,00 €</span>
<span class="t" style="top:585.00px;font-size:21.5px;color:#000;letter-spacing:0.406px;left:61.24px;">Beatrice</span>
<span class="t" style="top:585.00px;font-size:21.5px;color:#000;letter-spacing:0.298px;left:899.38px;">29</span>
<span class="t" style="top:585.00px;font-size:21.5px;color:#000;letter-spacing:0.263px;left:1104.88px;">27.000,00 €</span>
<span class="t" style="top:618.00px;font-size:21.5px;color:#000;letter-spacing:0.300px;left:61.24px;">Claudio</span>
<span class="t" style="top:618.00px;font-size:21.5px;color:#000;letter-spacing:0.298px;left:899.38px;">46</span>
<span class="t" style="top:618.00px;font-size:21.5px;color:#000;letter-spacing:0.263px;left:1104.88px;">66.000,00 €</span>
<span class="t" style="top:651.00px;font-size:21.5px;color:#000;letter-spacing:-0.207px;left:61.24px;">Francesco</span>
<span class="t" style="top:651.00px;font-size:21.5px;color:#000;letter-spacing:0.298px;left:899.38px;">39</span>
<span class="t" style="top:651.00px;font-size:21.5px;color:#000;letter-spacing:0.263px;left:1104.88px;">55.000,00 €</span>
<span class="t" style="top:684.00px;font-size:21.5px;color:#000;letter-spacing:0.362px;left:61.24px;">Giacomo</span>
<span class="t" style="top:684.00px;font-size:21.5px;color:#000;letter-spacing:0.298px;left:899.38px;">44</span>
<span class="t" style="top:684.00px;font-size:21.5px;color:#000;letter-spacing:0.263px;left:1104.88px;">40.000,00 €</span>
<span class="t" style="top:717.00px;font-size:21.5px;color:#000;letter-spacing:0.321px;left:61.24px;">Luigi</span>
<span class="t" style="top:717.00px;font-size:21.5px;color:#000;letter-spacing:0.298px;left:899.38px;">25</span>
<span class="t" style="top:717.00px;font-size:21.5px;color:#000;letter-spacing:0.263px;left:1104.88px;">21.000,00 €</span>
<span class="t" style="top:750.00px;font-size:21.5px;color:#000;letter-spacing:0.054px;left:61.24px;">Riccardo</span>
<span class="t" style="top:750.00px;font-size:21.5px;color:#000;letter-spacing:0.298px;left:899.38px;">33</span>
<span class="t" style="top:750.00px;font-size:21.5px;color:#000;letter-spacing:0.263px;left:1104.88px;">35.000,00 €</span>
<span class="t" style="top:783.00px;font-size:21.5px;color:#000;letter-spacing:-0.734px;left:61.24px;">Sara</span>
<span class="t" style="top:783.00px;font-size:21.5px;color:#000;letter-spacing:0.298px;left:899.38px;">31</span>
<span class="t" style="top:783.00px;font-size:21.5px;color:#000;letter-spacing:0.263px;left:1104.88px;">33.000,00 €</span>
<span class="t" style="top:816.00px;font-size:21.5px;color:#000;letter-spacing:0.163px;left:61.24px;">Simona</span>
<span class="t" style="top:816.00px;font-size:21.5px;color:#000;letter-spacing:0.298px;left:899.38px;">27</span>
<span class="t" style="top:816.00px;font-size:21.5px;color:#000;letter-spacing:0.263px;left:1104.88px;">42.000,00 €</span>
<span class="t" style="top:849.00px;font-size:21.5px;color:#000;letter-spacing:-0.074px;left:61.24px;">Sofia</span>
<span class="t" style="top:849.00px;font-size:21.5px;color:#000;letter-spacing:0.298px;left:899.38px;">28</span>
<span class="t" style="top:849.00px;font-size:21.5px;color:#000;letter-spacing:0.263px;left:1104.88px;">26.000,00 €</span>
<div class="b" style="left:2133px;top:378px;width:24px;height:770px;background:#e6e6e6"></div><div class="b" style="left:2133px;top:378px;width:24px;height:25px;background:#fff;border:1px solid #c8c8c8"></div><div class="b" style="left:2133px;top:402px;width:24px;height:289px;background:#fff;border:1px solid #c8c8c8"></div><div class="b" style="left:2133px;top:1123px;width:24px;height:25px;background:#fff;border:1px solid #c8c8c8"></div><svg style="left:2133px;top:378px" width="24" height="25"><path d="M6.1 15 L12 8.2 L17.9 15 Z" fill="#777"/></svg><svg style="left:2133px;top:1123px" width="24" height="25"><path d="M6.1 9.6 L12 16.4 L17.9 9.6 Z" fill="#777"/></svg><div class="b" style="left:57px;top:1148px;width:2076px;height:24px;background:#e6e6e6"></div><div class="b" style="left:58px;top:1148px;width:26px;height:24px;background:#fff;border:1px solid #c8c8c8"></div><div class="b" style="left:83px;top:1148px;width:600px;height:24px;background:#fff;border:1px solid #c8c8c8"></div><div class="b" style="left:2108px;top:1148px;width:25px;height:24px;background:#fff;border:1px solid #c8c8c8"></div><svg style="left:58px;top:1148px" width="26" height="24"><path d="M15.5 6.5 L9 12 L15.5 17.5 Z" fill="#666"/></svg><svg style="left:2108px;top:1148px" width="25" height="24"><path d="M10 6.5 L16.5 12 L10 17.5 Z" fill="#666"/></svg><div class="b" style="left:2133px;top:1148px;width:24px;height:24px;background:#f5f5f5"></div>
<svg style="left:14px;top:1186px" width="130" height="24"><path d="M12.7 3.5 L4.3 11.1 L12.7 18.8" fill="none" stroke="#b0b0b0" stroke-width="1.5"/><path d="M58.4 3.5 L66.8 11.1 L58.4 18.8" fill="none" stroke="#b0b0b0" stroke-width="1.5"/><path d="M104.8 5.2 H125 M104.8 11.8 H125 M104.8 18.4 H125" stroke="#333" stroke-width="1.6"/></svg>
<span class="t" style="top:1187.00px;font-size:23px;color:#333;-webkit-text-stroke:0.55px currentColor;letter-spacing:-0.050px;left:173.48px;">Foglio1</span>
<div class="b" style="left:170px;top:1221px;width:81px;height:4px;background:#217346"></div>
<svg style="left:281px;top:1188px" width="20" height="20"><path d="M9.2 0.6 V18.6 M0.8 9.6 H17.6" stroke="#333" stroke-width="1.5"/></svg>
<div class="b" style="left:0;top:1225.2px;width:2157px;height:1.3px;background:#e1e1e1"></div>
<div class="b" style="left:0;top:1226.5px;width:2157px;height:34px;background:#fff"></div>
<div class="b" style="left:0;top:1260.5px;width:2157px;height:2.5px;background:#231f1c"></div>
<span class="t" style="top:1236.00px;font-size:20.3px;color:#444;letter-spacing:0.079px;left:19.59px;">Modalità</span>
<span class="t" style="top:1236.00px;font-size:20.3px;color:#444;letter-spacing:0.727px;left:102.09px;">di</span>
<span class="t" style="top:1236.00px;font-size:20.3px;color:#444;letter-spacing:-0.351px;left:123.89px;">calcolo:</span>
<span class="t" style="top:1236.00px;font-size:20.3px;color:#444;letter-spacing:0.073px;left:194.89px;">Automatico</span>
<span class="t" style="top:1236.00px;font-size:20.3px;color:#444;letter-spacing:-0.250px;left:324.79px;">Statistiche cartella di lavoro</span>
<svg style="left:1646px;top:1241px" width="13" height="9"><path d="M1.5 1.8 L6.3 6.4 L11.1 1.8" fill="none" stroke="#555" stroke-width="1.8"/></svg>
<span class="t" style="top:1236.00px;font-size:20.3px;color:#444;letter-spacing:-0.655px;left:1725.29px;">Invia</span>
<span class="t" style="top:1236.00px;font-size:20.3px;color:#444;letter-spacing:-0.372px;left:1770.89px;">feedback</span>
<span class="t" style="top:1236.00px;font-size:20.3px;color:#444;left:1855.49px;">a</span>
<span class="t" style="top:1236.00px;font-size:20.3px;color:#444;letter-spacing:0.095px;left:1872.09px;">Microsoft</span>
<svg style="left:2020px;top:1232px" width="112" height="24"><path d="M1.4 11.5 H19.8" stroke="#444" stroke-width="1.5"/><path d="M91.5 11.5 H109.5 M100.5 2.5 V20.5" stroke="#444" stroke-width="1.5"/></svg>
<span class="t" style="top:1236.00px;font-size:20.3px;color:#444;letter-spacing:-0.984px;left:2052.89px;">100%</span>
<div class="b" style="left:297px;top:343px;width:444px;height:905.5999999999999px;background:#fff;border-radius:3px;box-shadow:0 5px 16px rgba(0,0,0,0.22),0 0 5px rgba(0,0,0,0.12)"></div>
<div class="b" style="left:298px;top:343px;width:443px;height:65px;background:#f3f2f1"></div>
<svg style="left:0;top:0" width="2157" height="1263"><path d="M318.70 376.30 L323.70 364.90 L328.70 376.30 M320.60 372.42 H326.80" stroke="#1e8bcd" stroke-width="1.35" fill="none" stroke-linejoin="miter" stroke-miterlimit="2"/><path d="M318.60 381.35 H327.80 L318.60 392.25 H327.80" stroke="#3b3a39" stroke-width="1.35" fill="none" stroke-linejoin="miter"/><path d="M339.1 364.3 V392.6 M333 386.2 L339.1 392.8 L345.2 386.2" stroke="#3b3a39" stroke-width="1.5" fill="none" /><path d="M318.60 421.05 H327.80 L318.60 431.95 H327.80" stroke="#3b3a39" stroke-width="1.35" fill="none" stroke-linejoin="miter"/><path d="M318.70 449.20 L323.70 437.80 L328.70 449.20 M320.60 445.32 H326.80" stroke="#1e8bcd" stroke-width="1.35" fill="none" stroke-linejoin="miter" stroke-miterlimit="2"/><path d="M339.1 420.2 V448.5 M333 442.09999999999997 L339.1 448.7 L345.2 442.09999999999997" stroke="#3b3a39" stroke-width="1.5" fill="none" /><rect x="317.6" y="532.6" width="27.6" height="27.6" fill="#fafafa" stroke="#3b3a39" stroke-width="1.7"/><rect x="318.4" y="533.4" width="26" height="3.4" fill="#c8c6c4"/><path d="M317.6 537.4 H345.2" stroke="#3b3a39" stroke-width="1.4" fill="none" /><path d="M325.6 541 V555.3 M320.8 550.6 L325.6 555.5 L330.4 550.6" stroke="#1e8bcd" stroke-width="1.6" fill="none" /><path d="M337.4 556 V541.9 M332.6 546.6 L337.4 541.7 L342.2 546.6" stroke="#3b3a39" stroke-width="1.6" fill="none" /><path d="M317.8 607.6 C322 599.5 340.5 599.5 345 607.6" stroke="#323130" stroke-width="1.6" fill="none" /><path d="M317.8 607.6 C323 616 340 616 345 607.6" stroke="#323130" stroke-width="1.6" fill="none" /><circle cx="331.3" cy="606.8" r="5" fill="none" stroke="#323130" stroke-width="1.6"/><circle cx="331.3" cy="606.8" r="1.9" fill="#323130"/><path d="M317.6 656.8 H343.8 V661.5 L335.2 671.5 M327.2 684 V671.5 L317.6 661.5 V656.8" stroke="#b9b7b5" stroke-width="1.7" fill="none" /><path d="M332.4 671.4 L347.2 686.2 M347.2 671.4 L332.4 686.2" stroke="#f4a9a9" stroke-width="1.5" fill="none" /><path d="M709.6 480.0 L720.2 490.6 L709.6 501.20000000000005" stroke="#323130" stroke-width="1.7" fill="none" /><path d="M709.6 597.8 L720.2 608.4 L709.6 619.0" stroke="#323130" stroke-width="1.7" fill="none" /><path d="M709.6 716.0 L720.2 726.6 L709.6 737.2" stroke="#323130" stroke-width="1.7" fill="none" /><rect x="311.3" y="577.1" width="415.7" height="1.7" fill="#e1dfdd"/><rect x="311.3" y="639.5" width="415.7" height="1.7" fill="#e1dfdd"/><rect x="353" y="757.5" width="368.6" height="1.6" fill="#e1dfdd"/><rect x="353.7" y="766.1" width="369.7" height="50" rx="5" fill="#fff" stroke="#605e5c" stroke-width="1.1"/><circle cx="381.3" cy="784.4" r="7.3" fill="none" stroke="#323130" stroke-width="1.4"/><path d="M376 789.8 L368.6 800.8" stroke="#323130" stroke-width="1.4" fill="none" /><rect x="715.3" y="841.3" width="8.6" height="191.2" rx="4.3" fill="#e8e8e8"/><rect x="362.8" y="844.2" width="24.8" height="24.8" rx="3" fill="#fff" stroke="#605e5c" stroke-width="1.1"/><path d="M366.6 857.4 L372.6 863.4 L383.2 851.6" stroke="#323130" stroke-width="1.5" fill="none" /><rect x="362.8" y="890.1" width="24.8" height="24.8" rx="3" fill="#fff" stroke="#605e5c" stroke-width="1.1"/><path d="M366.6 903.3 L372.6 909.3 L383.2 897.5" stroke="#323130" stroke-width="1.5" fill="none" /><rect x="362.8" y="936.2" width="24.8" height="24.8" rx="3" fill="#fff" stroke="#605e5c" stroke-width="1.1"/><path d="M366.6 949.4 L372.6 955.4 L383.2 943.6" stroke="#323130" stroke-width="1.5" fill="none" /><rect x="362.8" y="982.5" width="24.8" height="24.8" rx="3" fill="#fff" stroke="#605e5c" stroke-width="1.1"/><path d="M366.6 995.7 L372.6 1001.7 L383.2 989.9" stroke="#323130" stroke-width="1.5" fill="none" /><rect x="362.8" y="1029.4" width="24.8" height="24.8" rx="3" fill="#fff" stroke="#605e5c" stroke-width="1.1"/><path d="M366.6 1042.6 L372.6 1048.6 L383.2 1036.8" stroke="#323130" stroke-width="1.5" fill="none" /><rect x="362.8" y="1075.3" width="24.8" height="24.8" rx="3" fill="#fff" stroke="#605e5c" stroke-width="1.1"/><path d="M366.6 1088.5 L372.6 1094.5 L383.2 1082.7" stroke="#323130" stroke-width="1.5" fill="none" /><rect x="362.8" y="1121.2" width="24.8" height="24.8" rx="3" fill="#fff" stroke="#605e5c" stroke-width="1.1"/><path d="M366.6 1134.4 L372.6 1140.4 L383.2 1128.6" stroke="#323130" stroke-width="1.5" fill="none" /></svg>
<div class="b" style="left:353px;top:1179px;width:155px;height:52.7px;background:#217346;border-radius:3px"></div>
<span class="t" style="top:1196.00px;font-size:23.6px;color:#fff;-webkit-text-stroke:0.55px currentColor;letter-spacing:0.500px;left:390.36px;">Applica</span>
<span class="t" style="top:370.00px;font-size:22.6px;color:#323130;letter-spacing:0.356px;left:363.90px;">Ordina</span>
<span class="t" style="top:370.00px;font-size:22.6px;color:#323130;letter-spacing:0.114px;left:439.90px;">dalla</span>
<span class="t" style="top:370.00px;font-size:22.6px;color:#323130;left:494.30px;">A</span>
<span class="t" style="top:370.00px;font-size:22.6px;color:#323130;letter-spacing:-0.255px;left:515.80px;">alla</span>
<span class="t" style="top:370.00px;font-size:22.6px;color:#323130;left:556.10px;">Z</span>
<span class="t" style="top:426.00px;font-size:22.6px;color:#323130;letter-spacing:0.356px;left:363.90px;">Ordina</span>
<span class="t" style="top:426.00px;font-size:22.6px;color:#323130;letter-spacing:0.114px;left:439.90px;">dalla</span>
<span class="t" style="top:426.00px;font-size:22.6px;color:#323130;left:494.30px;">Z</span>
<span class="t" style="top:426.00px;font-size:22.6px;color:#323130;letter-spacing:-0.188px;left:513.90px;">alla</span>
<span class="t" style="top:426.00px;font-size:22.6px;color:#323130;left:554.60px;">A</span>
<span class="t" style="top:482.00px;font-size:22.6px;color:#323130;letter-spacing:0.356px;left:363.90px;">Ordina</span>
<span class="t" style="top:482.00px;font-size:22.6px;color:#323130;letter-spacing:0.426px;left:440.30px;">per</span>
<span class="t" style="top:482.00px;font-size:22.6px;color:#323130;letter-spacing:0.492px;left:479.90px;">colore</span>
<span class="t" style="top:538.00px;font-size:22.6px;color:#323130;letter-spacing:0.510px;left:363.90px;">Ordinamento</span>
<span class="t" style="top:538.00px;font-size:22.6px;color:#323130;letter-spacing:0.077px;left:506.70px;">personalizzato</span>
<span class="t" style="top:600.00px;font-size:22.6px;color:#323130;letter-spacing:-0.116px;left:363.90px;">Visualizzazione</span>
<span class="t" style="top:600.00px;font-size:22.6px;color:#323130;letter-spacing:1.058px;left:523.70px;">foglio</span>
<span class="t" style="top:662.00px;font-size:22.6px;color:#b3b0ad;letter-spacing:-0.402px;left:363.90px;">Cancella</span>
<span class="t" style="top:662.00px;font-size:22.6px;color:#b3b0ad;letter-spacing:1.104px;left:455.40px;">filtro</span>
<span class="t" style="top:662.00px;font-size:22.6px;color:#b3b0ad;letter-spacing:0.067px;left:509.60px;">da</span>
<span class="t" style="top:662.00px;font-size:22.6px;color:#b3b0ad;letter-spacing:-0.103px;left:542.70px;">'NOME'</span>
<span class="t" style="top:718.00px;font-size:22.6px;color:#323130;letter-spacing:-0.033px;left:364.90px;">Filtri</span>
<span class="t" style="top:718.00px;font-size:22.6px;color:#323130;letter-spacing:0.026px;left:414.50px;">per</span>
<span class="t" style="top:718.00px;font-size:22.6px;color:#323130;letter-spacing:0.581px;left:454.40px;">testo</span>
<span class="t" style="top:782.00px;font-size:22.6px;color:#6e6c6a;letter-spacing:-0.743px;left:402.90px;">Cerca</span>
<span class="t" style="top:849.00px;font-size:22.6px;color:#323130;letter-spacing:0.259px;left:403.10px;">Seleziona tutto</span>
<span class="t" style="top:895.00px;font-size:22.6px;color:#323130;letter-spacing:-0.049px;left:403.10px;">Alessandro</span>
<span class="t" style="top:941.00px;font-size:22.6px;color:#323130;letter-spacing:0.153px;left:403.10px;">Arianna</span>
<span class="t" style="top:987.00px;font-size:22.6px;color:#323130;letter-spacing:-0.155px;left:403.10px;">Beatrice</span>
<span class="t" style="top:1033.00px;font-size:22.6px;color:#323130;letter-spacing:0.197px;left:403.10px;">Claudio</span>
<span class="t" style="top:1079.00px;font-size:22.6px;color:#323130;letter-spacing:-0.547px;left:403.10px;">Francesco</span>
<span class="t" style="top:1125.00px;font-size:22.6px;color:#323130;letter-spacing:0.148px;left:403.10px;">Giacomo</span>
<div class="b" style="left:297.5px;top:342.9px;width:443.2px;height:65.8px;border:5.2px solid #fb0007"></div>
<svg style="left:0;top:0" width="700" height="600"><ellipse cx="278.5" cy="484.3" rx="32.35" ry="29.15" fill="none" stroke="#fb0007" stroke-width="5.3"/></svg>
</body></html>
